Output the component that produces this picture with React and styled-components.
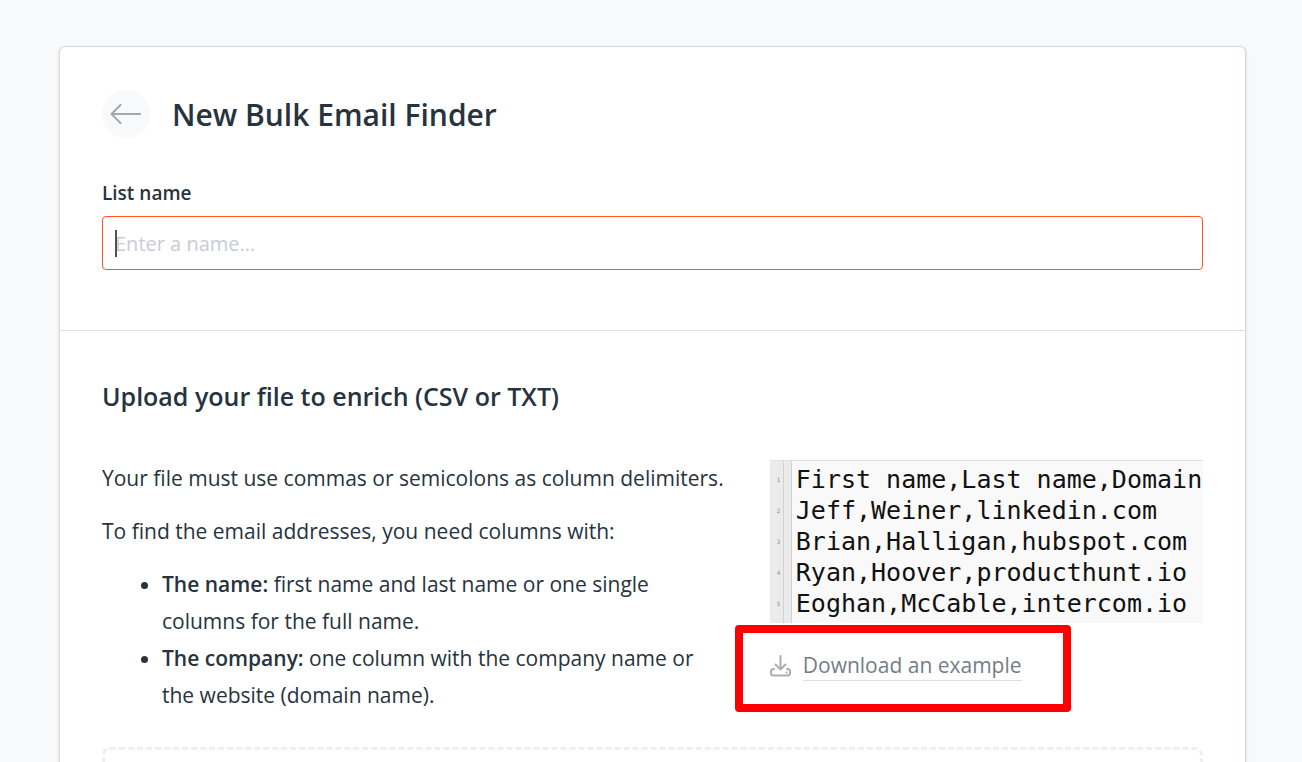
import React from 'react';
import styled, { createGlobalStyle } from 'styled-components';

const lines = [
	'First name,Last name,Domain',
	'Jeff,Weiner,linkedin.com',
	'Brian,Halligan,hubspot.com',
	'Ryan,Hoover,producthunt.io',
	'Eoghan,McCable,intercom.io',
];

const App = () => {
	return (
		<>
			<GlobalStyle />
			<Page>
				<Card>
					<Section>
						<Header>
							<BackButton type="button" aria-label="Back">
								<svg width="32" height="20" viewBox="0 0 32 20">
									<path d="M30 10H1.5M10.5 1L1.5 10L10.5 19" />
								</svg>
							</BackButton>
							<Title>New Bulk Email Finder</Title>
						</Header>
						<Label htmlFor="listName">List name</Label>
						<InputBox>
							<Input type="text" id="listName" name="listName" placeholder="Enter a name..." />
							<Caret />
						</InputBox>
					</Section>
					<Section $upload>
						<Subtitle>Upload your file to enrich (CSV or TXT)</Subtitle>
						<Columns>
							<Instructions>
								<p>Your file must use commas or semicolons as column delimiters.</p>
								<p>To find the email addresses, you need columns with:</p>
								<ul>
									<li>
										<strong>The name:</strong> first name and last name or one single columns for the
										full name.
									</li>
									<li>
										<strong>The company:</strong> one column with the company name or the website
										(domain name).
									</li>
								</ul>
							</Instructions>
							<Example>
								<Code>
									{lines.map((line, i) => (
										<CodeLine key={line}>
											<LineNumber>{i + 1}</LineNumber>
											<code>{line}</code>
										</CodeLine>
									))}
								</Code>
								<Download>
									<svg width="22" height="22" viewBox="0 0 22 22">
										<path d="M10.5 1V14.5M5.5 9.5L10.5 14.5L15.5 9.5" />
										<path d="M4 14H3.5Q1 14 1 16.5V18Q1 20.5 3.5 20.5H17.5Q20 20.5 20 18V16.5Q20 14 17.5 14H17" />
										<path d="M16.5 17.5H16.6" />
									</svg>
									<a href="#example">Download an example</a>
									<Highlight />
								</Download>
							</Example>
						</Columns>
						<DropZone />
					</Section>
				</Card>
			</Page>
		</>
	);
};

export default App;

const GlobalStyle = createGlobalStyle`
	* {
		box-sizing: border-box;
	}
	body {
		margin: 0;
		height: 100vh;
		overflow: hidden;
		background: #f8f9fb;
		color: #27333e;
		font-family: 'Open Sans', 'Noto Sans', sans-serif;
	}
`;

const Page = styled.main`
	padding: 47px 57px 0 60px;
`;

const Card = styled.div`
	background: #fff;
	border-radius: 5px;
	box-shadow: 0 0 0 1px #d6d8da, 0 1px 3px 1px rgba(0, 0, 0, 0.15);
`;

const Section = styled.section`
	padding: ${({ $upload }) => ($upload ? '45px 42px 60px' : '43px 42px 60px')};
	border-top: ${({ $upload }) => ($upload ? '1px solid #dfe0e3' : 'none')};
`;

const Header = styled.header`
	display: flex;
	align-items: center;
	gap: 22px;
	margin-bottom: 40px;
`;

const BackButton = styled.button`
	display: flex;
	align-items: center;
	justify-content: center;
	align-self: flex-start;
	width: 48px;
	height: 48px;
	padding: 0;
	border: none;
	border-radius: 50%;
	background: #f8f9fb;

	path {
		fill: none;
		stroke: #a3a8ae;
		stroke-width: 2;
		stroke-linecap: round;
		stroke-linejoin: round;
	}
`;

const Title = styled.h1`
	margin: 0;
	font-size: 30px;
	font-weight: 600;
	line-height: 50px;
`;

const Label = styled.label`
	display: block;
	margin-bottom: 10px;
	font-size: 19px;
	font-weight: 600;
	line-height: 26px;
`;

const InputBox = styled.div`
	position: relative;
`;

const Input = styled.input`
	display: block;
	width: 100%;
	height: 54px;
	padding: 0 12px;
	border: 1px solid #ff5722;
	border-radius: 4px;
	outline: none;
	background: #fff;
	color: #27333e;
	font-family: inherit;
	font-size: 20px;

	&::placeholder {
		color: #c8ccd4;
		opacity: 1;
	}
`;

const Caret = styled.span`
	position: absolute;
	top: 14px;
	left: 13px;
	width: 2px;
	height: 27px;
	background: #505356;
`;

const Subtitle = styled.h2`
	margin: 0 0 44px;
	font-size: 25px;
	font-weight: 600;
	line-height: 40px;
`;

const Columns = styled.div`
	display: grid;
	grid-template-columns: 3fr 2fr;
	gap: 18px;
`;

const Instructions = styled.div`
	padding-right: 24px;
	font-size: 21px;
	line-height: 36px;

	p {
		margin: 0 0 17px;
	}
	ul {
		margin: 0;
		padding-left: 60px;
		line-height: 37px;
	}
	strong {
		font-weight: 600;
	}
`;

const Example = styled.div`
	color: #747d86;
`;

const Code = styled.div`
	height: 163px;
	padding-top: 3px;
	border-top: 1px solid #e0e0e0;
	overflow: hidden;
	background: linear-gradient(
		to right,
		#ebebeb 13px,
		#d2d2d2 13px 14px,
		#ebebeb 14px 21px,
		#d2d2d2 21px 22px,
		#f9f9f9 22px
	);
`;

const CodeLine = styled.div`
	display: flex;
	align-items: center;
	height: 31px;

	code {
		color: #111;
		font-family: 'DejaVu Sans Mono', monospace;
		font-size: 25px;
		line-height: 31px;
		white-space: pre;
	}
`;

const LineNumber = styled.span`
	flex: none;
	width: 26px;
	padding-left: 7px;
	color: #8d8d8d;
	font-family: 'DejaVu Sans Mono', monospace;
	font-size: 6px;
`;

const Download = styled.div`
	position: relative;
	display: flex;
	align-items: center;
	gap: 11px;
	margin-top: 28px;

	path {
		fill: none;
		stroke: #a9aeb5;
		stroke-width: 2;
		stroke-linecap: round;
		stroke-linejoin: round;
	}
	a {
		border-bottom: 1px solid #dcdee2;
		color: inherit;
		font-size: 21px;
		line-height: 29px;
		text-decoration: none;
	}
`;

const Highlight = styled.span`
	position: absolute;
	top: -26px;
	left: -35px;
	width: 336px;
	height: 87px;
	border: 8px solid #f00;
	border-radius: 4px;
	pointer-events: none;
`;

const DropZone = styled.div`
	height: 180px;
	margin-top: 33px;
	border: 3px dashed #eeeff2;
	border-radius: 8px;
`;
